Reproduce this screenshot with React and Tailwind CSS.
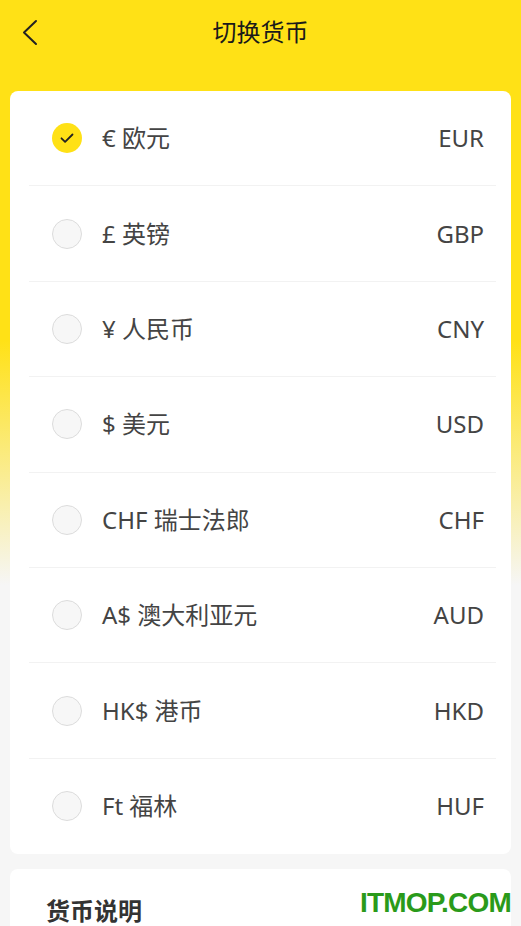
import { useState } from "react";

const CURRENCIES = [
  { code: "EUR", label: "€ 欧元" },
  { code: "GBP", label: "£ 英镑" },
  { code: "CNY", label: "¥ 人民币" },
  { code: "USD", label: "$ 美元" },
  { code: "CHF", label: "CHF 瑞士法郎" },
  { code: "AUD", label: "A$ 澳大利亚元" },
  { code: "HKD", label: "HK$ 港币" },
  { code: "HUF", label: "Ft 福林" },
];

const font = "font-['Noto_Sans','Noto_Sans_CJK_SC',sans-serif]";

function Radio({ checked }) {
  if (checked) {
    return (
      <div className="flex h-[30px] w-[30px] items-center justify-center rounded-full bg-[#ffe116]">
        <svg width="16" height="16" viewBox="0 0 16 16" fill="none">
          <path d="M2.5 8.3l3.6 3.6 7.4-7.4" stroke="#222" strokeWidth="1.8" strokeLinecap="round" strokeLinejoin="round" />
        </svg>
      </div>
    );
  }
  return <div className="h-[30px] w-[30px] rounded-full border border-[#dcdcdc] bg-[#f7f7f7]" />;
}

export default function App() {
  const [selected, setSelected] = useState("EUR");

  return (
    <div className={`relative min-h-[926px] bg-[linear-gradient(180deg,#ffe116_340px,#f6f6f6_585px)] ${font}`}>
      <header className="relative flex h-[66px] items-center justify-center">
        <button className="absolute left-[20px] top-[18px] p-0">
          <svg width="22" height="30" viewBox="0 0 22 30" fill="none">
            <path d="M16 3L4 14.5 16 26" stroke="#222" strokeWidth="2" strokeLinecap="round" strokeLinejoin="round" />
          </svg>
        </button>
        <h1 className="-mt-[2px] text-[24px] leading-none text-[#1a1a1a]">切换货币</h1>
      </header>

      <div className="px-[10px] pt-[25px]">
        <ul className="rounded-[8px] bg-white">
          {CURRENCIES.map((c) => (
            <li
              key={c.code}
              onClick={() => setSelected(c.code)}
              className="ml-[19px] mr-[15px] flex h-[95.4px] items-center border-b border-[#f2f2f2] pl-[23px] pr-[12px] last:border-b-0"
            >
              <Radio checked={selected === c.code} />
              <span className="ml-[20px] flex-1 text-[24px] leading-none text-[#444]">{c.label}</span>
              <span className="text-[24px] leading-none text-[#444]">{c.code}</span>
            </li>
          ))}
        </ul>

        <div className="mt-[15px] rounded-t-[8px] bg-white px-[36px] pt-[30px] pb-[20px]">
          <h2 className="text-[24px] font-bold leading-none text-[#333]">货币说明</h2>
        </div>
      </div>

      <div className="absolute right-[10px] top-[889px] font-['Liberation_Sans',sans-serif] text-[28px] font-bold leading-none tracking-[-0.8px] text-[#2a9a1a]">
        ITMOP.COM
      </div>
    </div>
  );
}
